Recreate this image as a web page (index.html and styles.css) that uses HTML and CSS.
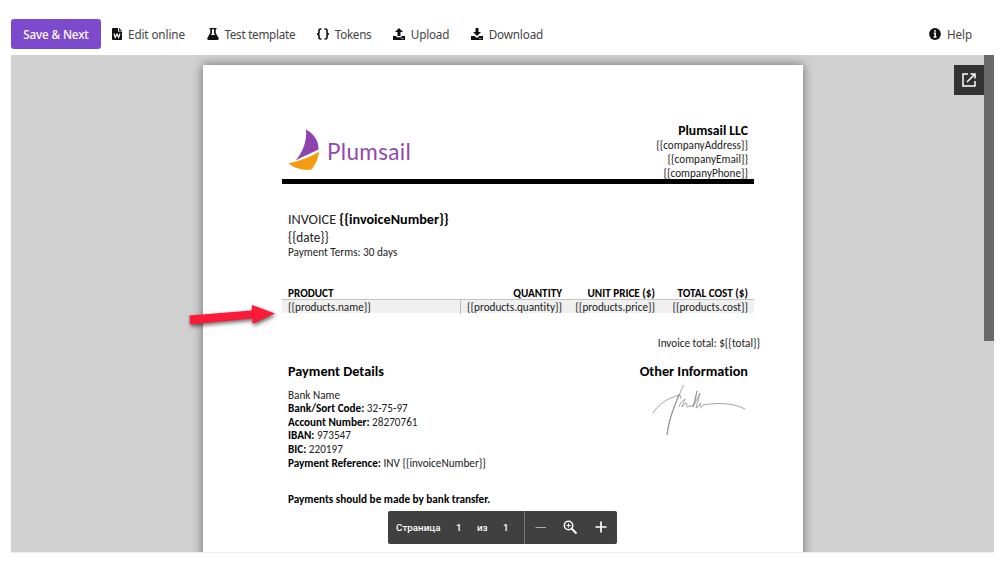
FILE: index.html
```html
<!DOCTYPE html>
<html lang="en">
<head>
<meta charset="utf-8">
<title>Invoice template</title>
<link rel="stylesheet" href="styles.css">
</head>
<body>
<header class="toolbar">
  <button class="save">Save &amp; Next</button>
  <a class="tool edit"><svg width="10" height="12" viewBox="0 0 10 12"><path d="M1 0h5v3.500h4V11a1 1 0 0 1-1 1H1a1 1 0 0 1-1-1V1a1 1 0 0 1 1-1zM7 0l3 2.800H7z"/><path d="M2 5.500l1.200 4L5 6l1.700 3.500L8 5.500" fill="none" stroke="#fff" stroke-width="1.200"/></svg><span>Edit online</span></a>
  <a class="tool test"><svg width="12" height="12" viewBox="0 0 12 12"><path d="M2.500 0h7v1.300H8.700V5L11.800 10.300Q12 12 10.500 12H1.500Q0 12 .2 10.300L3.300 5V1.300h-.8zM5 1.300v4L4 7h4L7 5.300v-4z" fill-rule="evenodd"/></svg><span>Test template</span></a>
  <a class="tool tokens"><svg width="14" height="12" viewBox="0 0 14 12"><path d="M5.500 1H4.500Q3 1 3 2.300V4.500Q3 6 1 6Q3 6 3 7.500V9.700Q3 11 4.500 11H5.500M8.500 1h1Q11 1 11 2.300V4.500Q11 6 13 6Q11 6 11 7.500V9.700Q11 11 9.500 11H8.500" fill="none" stroke="#111" stroke-width="1.600"/></svg><span>Tokens</span></a>
  <a class="tool upload"><svg width="12" height="12" viewBox="0 0 12 12"><path d="M6 0l4 4H7.500v4h-3V4H2zM0 8h3.500v1.200h5V8H12v4H0z"/><path d="M8 10.600h2.500" stroke="#fff" stroke-width=".6"/></svg><span>Upload</span></a>
  <a class="tool download"><svg width="12" height="12" viewBox="0 0 12 12"><path d="M4.500 0h3v4H10L6 8 2 4h2.500zM0 8h3.500L6 10l2.500-2H12v4H0z"/><path d="M8 10.600h2.500" stroke="#fff" stroke-width=".6"/></svg><span>Download</span></a>
  <a class="tool help"><svg width="12" height="12" viewBox="0 0 12 12"><circle cx="6" cy="6" r="5.900"/><path d="M6 2v1.800M4.800 5.300H6.200V8.700M4.600 9h2.900" fill="none" stroke="#fff" stroke-width="1.500"/></svg><span>Help</span></a>
</header>
<main class="viewer">
  <article class="page">
    <div class="letterhead">
      <div class="logo">
        <svg width="33" height="42" viewBox="0 0 33 42"><path d="M18 .5C26 5 31 12 30.500 20.500C24 24 15 27 7.500 31.500C15 23 19 12 18 .5z" fill="#8e44ad"/><path d="M.5 34.500C12 31.500 23 28 31 22.500C30.500 29 27.500 36 23.500 40.500C15 42 6 39 .5 34.500z" fill="#f39c12"/></svg>
        <span class="brand">Plumsail</span>
      </div>
      <div class="company"><b class="name">Plumsail LLC</b><span>{{companyAddress}}</span><span>{{companyEmail}}</span><span>{{companyPhone}}</span></div>
    </div>
    <div class="rule"></div>
    <section class="intro">
      <div class="number">INVOICE <b>{{invoiceNumber}}</b></div>
      <div class="date">{{date}}</div>
      <div class="terms">Payment Terms: 30 days</div>
    </section>
    <div class="products">
      <div class="row head"><span>PRODUCT</span><span>QUANTITY</span><span>UNIT PRICE ($)</span><span>TOTAL COST ($)</span></div>
      <div class="row item"><span>{{products.name}}</span><span>{{products.quantity}}</span><span>{{products.price}}</span><span>{{products.cost}}</span></div>
    </div>
    <div class="total">Invoice total: ${{total}}</div>
    <div class="details">
      <section>
        <h2>Payment Details</h2>
        <p>Bank Name</p>
        <p><b>Bank/Sort Code:</b> 32-75-97</p>
        <p><b>Account Number:</b> 28270761</p>
        <p><b>IBAN:</b> 973547</p>
        <p><b>BIC:</b> 220197</p>
        <p><b>Payment Reference:</b> INV {{invoiceNumber}}</p>
        <p class="note"><b>Payments should be made by bank transfer.</b></p>
      </section>
      <section class="other">
        <h2>Other Information</h2>
        <svg class="signature" width="96" height="54" viewBox="0 0 96 54"><path d="M3 30C8 22 17 15 30 12M33.500 2L24 24M29 11C24 24 19 38 17 52C18 42 20 34 24 24M30 12L31 16M29 24C30 20 33 17 35 16L32 24C34 21 37 19 37 21C36 25 38 25 40 22C40 25 43 24 45 18L47 8L43 24L50 10L46 25C48 25 49 21 51 20C49 24 51 26 53 22C65 20 82 19 95 26"/></svg>
      </section>
    </div>
  </article>
  <svg class="arrow" width="96" height="34" viewBox="0 0 96 34"><path d="M2.500 13.500L64.500 8.500L65 3L88 11.500L65.500 22L65.500 16.500L3 22.500z"/></svg>
  <button class="popout"><svg width="16" height="16" viewBox="0 0 16 16"><path d="M7 2H2v12h12V9M9.500 2H14v4.500M14 2L6 10" fill="none" stroke="#fff" stroke-width="1.500"/></svg></button>
  <div class="scrollbar"></div>
  <div class="pager">
    <div class="pages"><span class="label">Страница</span><span class="cur">1</span><span class="of">из</span><span class="count">1</span></div>
    <div class="zoom"><svg width="92" height="32" viewBox="0 0 92 32" fill="none" stroke="#fff"><path d="M10.500 16.500H21" stroke="#aaa" stroke-width="1"/><circle cx="43.500" cy="14.500" r="4.200" stroke-width="1.500"/><path d="M41.500 14.500h4M43.500 12.500v4" stroke-width="1"/><path d="M46.500 17.500l5 5" stroke-width="2"/><path d="M70.500 16h11M76 10.500v11" stroke-width="1.700"/></svg></div>
  </div>
</main>
</body>
</html>
```
FILE: styles.css
```css
* { box-sizing: border-box; }
body { margin: 0; height: 561px; overflow: hidden; background: #fff; color: #111; font-family: "Noto Sans", sans-serif; }
.toolbar { display: flex; align-items: center; height: 55px; padding: 13px 28px 0 11px; }
.save { width: 90px; height: 30px; padding: 0 0 1px; border: 0; border-radius: 3px; background: #7d4acd; color: #fff; font: 500 11.700px "Noto Sans", sans-serif; letter-spacing: -.15px; }
.tool { display: flex; align-items: center; font-size: 11.700px; line-height: 17px; color: #444; }
.tool svg { fill: #111; flex: none; }
.tool span { padding-top: 1px; }
.edit { margin-left: 11px; gap: 6px; letter-spacing: -.11px; }
.test { margin-left: 22px; gap: 5.500px; letter-spacing: -.27px; }
.tokens { margin-left: 20.500px; gap: 5px; letter-spacing: -.32px; }
.upload { margin-left: 21.500px; gap: 6px; letter-spacing: -.2px; }
.download { margin-left: 21.500px; gap: 6px; letter-spacing: -.15px; }
.help { margin-left: auto; gap: 6px; letter-spacing: -.1px; }
.viewer { position: relative; width: 983px; height: 498px; margin-left: 11px; overflow: hidden; background: #d1d1d1; border-bottom: 1px solid #ebebeb; }
.page { width: 600px; height: 520px; margin: 10px 0 0 192px; padding: 57px 0 0 85px; background: #fff; box-shadow: 0 0 10px rgba(0,0,0,.5); font-family: Carlito, Lato, sans-serif; font-size: 11.200px; line-height: 13.600px; color: #222; font-variant-ligatures: none; }
.page b, .page h2 { color: #000; }
.letterhead { display: flex; justify-content: space-between; width: 460px; height: 57px; }
.logo { display: flex; padding-top: 7px; }
.brand { margin: 7px 0 0 6px; font: 22.500px/32px Lato, sans-serif; letter-spacing: .35px; color: #9247b0; }
.company { display: flex; flex-direction: column; align-items: flex-end; line-height: 13.800px; }
.name { font-size: 13.700px; line-height: 17px; }
.rule { width: 472px; height: 5px; margin-left: -6px; background: #000; }
.intro { padding-top: 26px; }
.number { font-size: 14.200px; line-height: 18px; }
.date { padding-top: 1px; font-size: 13.200px; line-height: 17px; }
.terms { line-height: 13px; }
.products { width: 472px; margin: 27px 0 0 -6px; }
.row { display: grid; grid-template-columns: 179px 107px 93px 93px; height: 14px; line-height: 14px; text-align: right; }
.row > span { padding: 0 6px; white-space: nowrap; }
.row > span:first-child { text-align: left; }
.head { font-weight: 700; color: #000; }
.item { height: 13px; background: #f0f0f0; box-shadow: 0 -1px #c4c4c4; }
.item > span:first-child { border-right: 1px solid #bbb; }
.total { width: 472px; margin-top: 24px; text-align: right; }
.details { display: flex; justify-content: space-between; width: 460px; margin-top: 11px; }
h2 { margin: 0 0 9px; font-size: 14.250px; line-height: 18px; }
p { margin: 0; }
.note { margin-top: 22.500px; }
.other { display: flex; flex-direction: column; align-items: flex-end; }
.signature { margin: -6px 2px 0 0; fill: none; stroke: #8c8c8c; stroke-width: .8; }
.arrow { position: absolute; left: 176px; top: 247px; fill: #fb1a38; filter: drop-shadow(1px 2px 2px rgba(0,0,0,.6)); }
.popout { position: absolute; left: 943px; top: 10px; width: 30px; height: 30px; padding: 7px; border: 0; background: #333; line-height: 0; }
.scrollbar { position: absolute; right: 0; top: 0; width: 10px; height: 286px; background: #696969; }
.pager { position: absolute; left: 377px; top: 456px; display: flex; width: 229px; height: 33px; border-radius: 2px; background: #404040; color: #fff; }
.pages { display: flex; align-items: center; width: 137px; border-right: 1px solid #777; padding-left: 8px; font: 500 9.800px Roboto, sans-serif; }
.cur { margin-left: 15.500px; }
.of { margin-left: 15.500px; }
.count { margin-left: 15.500px; }
```
